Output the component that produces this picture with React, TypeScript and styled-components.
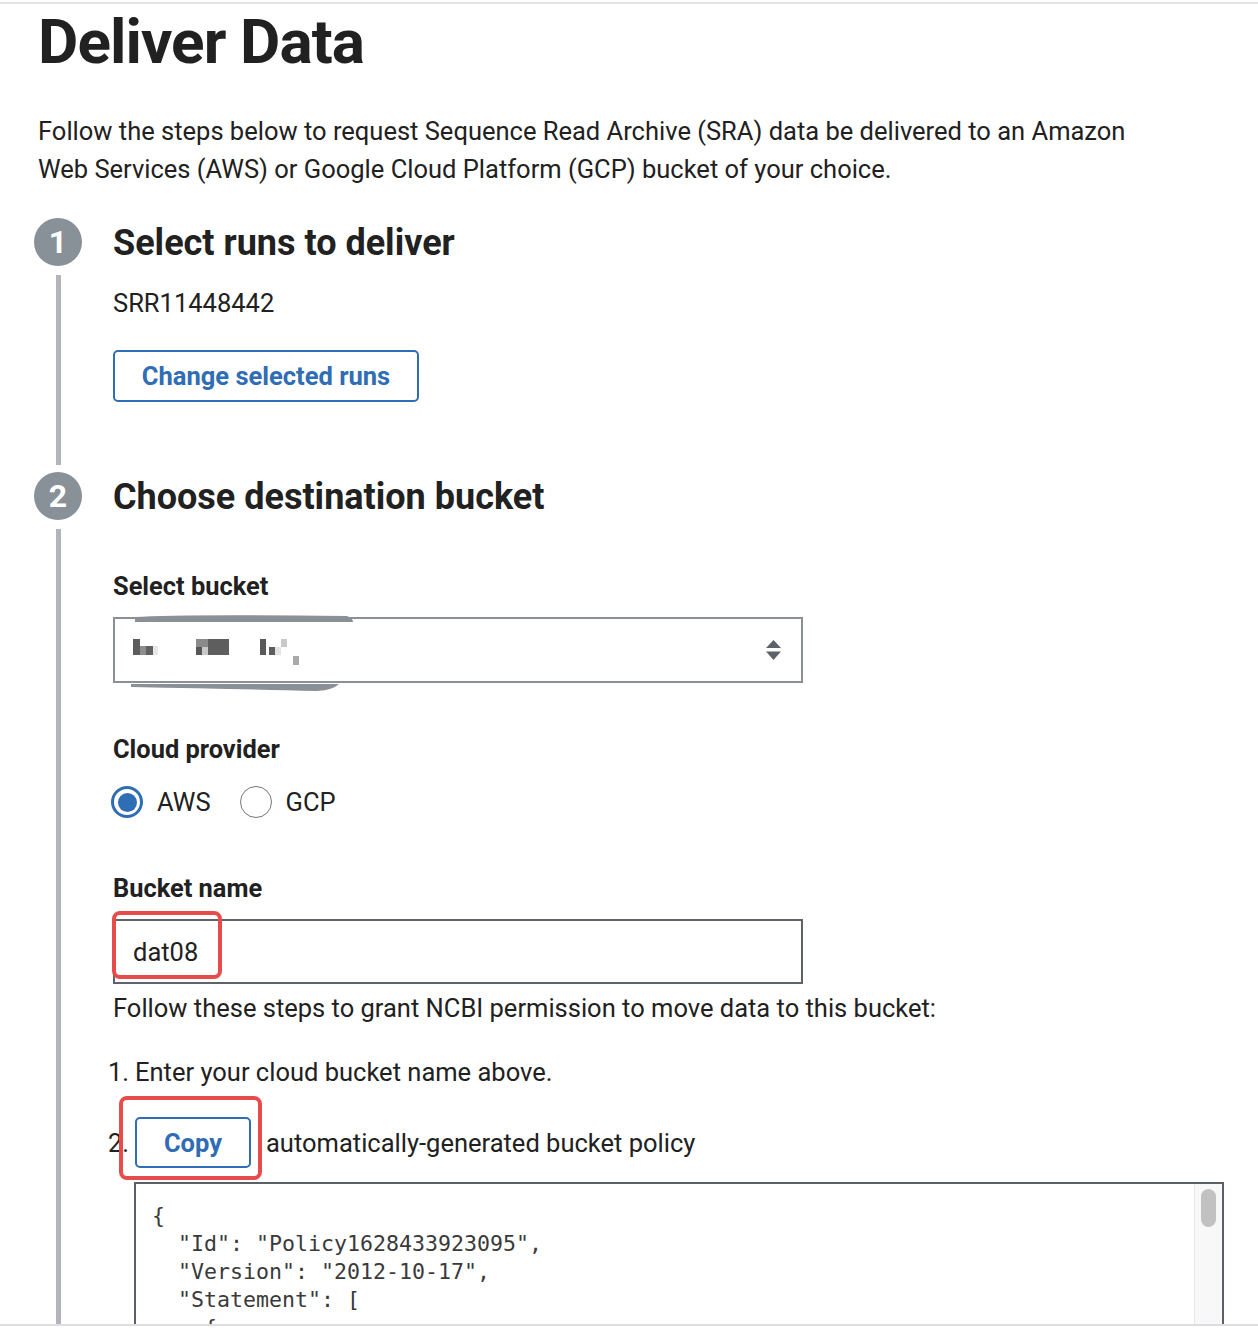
import * as React from 'react';
import styled, { createGlobalStyle } from 'styled-components';

const blue = '#2f6db5';
const ink = '#212121';

const GlobalStyle = createGlobalStyle`
  html, body {
    margin: 0;
    padding: 0;
    background: #fff;
  }
  body {
    font-family: Roboto, "Liberation Sans", Arial, sans-serif;
    color: ${ink};
  }
`;

const Frame = styled.div`
  margin-top: 2px;
  height: 1320px;
  overflow: hidden;
  border-top: 2px solid #e3e3e8;
  border-bottom: 2px solid #dcdce1;
`;

const Title = styled.h1`
  margin: 2px 0 0 38px;
  font-size: 62px;
  line-height: 72px;
  font-weight: 700;
  letter-spacing: -0.9px;
`;

const Intro = styled.p`
  margin: 34px 0 0 38px;
  font-size: 25.5px;
  line-height: 38px;
  max-width: 1105px;
`;

const Steps = styled.div`
  margin-top: 30px;
  padding-left: 34px;
`;

const Step = styled.section`
  display: grid;
  grid-template-columns: 79px 1fr;
`;

const Marker = styled.div`
  width: 48px;
  display: flex;
  flex-direction: column;
  align-items: center;
`;

const Bubble = styled.div`
  width: 48px;
  height: 48px;
  border-radius: 50%;
  background: #889098;
  color: #fff;
  font-size: 32px;
  font-weight: 700;
  display: flex;
  align-items: center;
  justify-content: center;
  flex-shrink: 0;
`;

const Rail = styled.div`
  width: 5px;
  flex: 1;
  background: #b3b3ba;
  margin: 9px 0 7px;
`;

const Body = styled.div<{ $pad?: number }>`
  padding-bottom: ${(p) => p.$pad ?? 0}px;
`;

const StepTitle = styled.h2`
  margin: 0;
  font-size: 36px;
  line-height: 50px;
  font-weight: 700;
`;

const Text = styled.div<{ $top: number }>`
  margin-top: ${(p) => p.$top}px;
  font-size: 25.5px;
  line-height: 38px;
`;

const Label = styled.div<{ $top: number }>`
  margin-top: ${(p) => p.$top}px;
  font-size: 25.4px;
  line-height: 38px;
  font-weight: 700;
`;

const OutlineButton = styled.button<{ $top?: number; $w: number; $h: number }>`
  display: flex;
  align-items: center;
  justify-content: center;
  margin-top: ${(p) => p.$top ?? 0}px;
  width: ${(p) => p.$w}px;
  height: ${(p) => p.$h}px;
  padding: 0;
  background: #fff;
  border: 2px solid ${blue};
  border-radius: 5px;
  color: ${blue};
  font-family: Roboto, "Liberation Sans", Arial, sans-serif;
  font-size: 25.5px;
  font-weight: 700;
  flex-shrink: 0;
`;

const Field = styled.div<{ $top: number; $h: number; $border: string }>`
  position: relative;
  margin-top: ${(p) => p.$top}px;
  width: 690px;
  height: ${(p) => p.$h}px;
  box-sizing: border-box;
  border: 2px solid ${(p) => p.$border};
  display: flex;
  align-items: center;
  padding: 0 18px;
  font-size: 25.5px;
`;

const Redaction = styled.svg`
  position: absolute;
  left: 6px;
  top: -6px;
`;

const Arrows = styled.svg`
  margin-left: auto;
  margin-right: 1px;
`;

const RadioRow = styled.div`
  margin-top: 15px;
  margin-left: -2px;
  height: 38px;
  display: flex;
  align-items: center;
  font-size: 25.5px;
`;

const Radio = styled.span<{ $on?: boolean }>`
  width: 32px;
  height: 32px;
  box-sizing: border-box;
  border-radius: 50%;
  border: ${(p) => (p.$on ? `3.5px solid ${blue}` : '1.5px solid #767676')};
  display: flex;
  align-items: center;
  justify-content: center;
  margin-right: 14px;

  &::after {
    content: '';
    width: 19px;
    height: 19px;
    border-radius: 50%;
    background: ${(p) => (p.$on ? blue : 'transparent')};
  }
`;

const Choice = styled.span`
  margin-right: 29px;
`;

const Callout = styled.div<{ $l: number; $t: number; $w: number; $h: number }>`
  position: absolute;
  left: ${(p) => p.$l}px;
  top: ${(p) => p.$t}px;
  width: ${(p) => p.$w}px;
  height: ${(p) => p.$h}px;
  box-sizing: border-box;
  border: 4px solid #e84b4b;
  border-radius: 8px;
  pointer-events: none;
`;

const Item = styled.div<{ $top: number }>`
  position: relative;
  margin: ${(p) => p.$top}px 0 0 -5px;
  display: flex;
  align-items: center;
  font-size: 25.5px;
  line-height: 38px;
`;

const Num = styled.span`
  width: 27px;
  flex-shrink: 0;
`;

const After = styled.span`
  margin-left: 15px;
`;

const Code = styled.div`
  margin: 14px 0 0 21px;
  width: 1090px;
  height: 420px;
  box-sizing: border-box;
  border: 2px solid #5b5f67;
  display: flex;
`;

const Pre = styled.pre`
  flex: 1;
  margin: 0;
  padding: 18px 0 0 16px;
  font-family: "DejaVu Sans Mono", "Liberation Mono", monospace;
  font-size: 21.6px;
  line-height: 28px;
  color: #3a3a3a;
`;

const Track = styled.div`
  width: 27px;
  background: #f8f8f8;
  border-left: 1px solid #e6e6e6;
  display: flex;
  justify-content: center;
  padding-top: 5px;
`;

const Thumb = styled.div`
  width: 15px;
  height: 38px;
  border-radius: 8px;
  background: #c1c1c1;
`;

const policy = `{
  "Id": "Policy1628433923095",
  "Version": "2012-10-17",
  "Statement": [
    {
      "Sid": "Stmt1628433923095",
      "Action": [
        "s3:PutObject"
      ],`;

export default function App() {
  return (
    <>
      <GlobalStyle />
      <Frame>
        <Title>Deliver Data</Title>
        <Intro>
          Follow the steps below to request Sequence Read Archive (SRA) data be delivered to an Amazon
          Web Services (AWS) or Google Cloud Platform (GCP) bucket of your choice.
        </Intro>
        <Steps>
          <Step>
            <Marker>
              <Bubble>1</Bubble>
              <Rail />
            </Marker>
            <Body $pad={70}>
              <StepTitle>Select runs to deliver</StepTitle>
              <Text $top={16}>SRR11448442</Text>
              <OutlineButton $top={28} $w={306} $h={52}>Change selected runs</OutlineButton>
            </Body>
          </Step>
          <Step>
            <Marker>
              <Bubble>2</Bubble>
              <Rail />
            </Marker>
            <Body>
              <StepTitle>Choose destination bucket</StepTitle>
              <Label $top={45}>Select bucket</Label>
              <Field $top={12} $h={66} $border="#8b9097">
                <Redaction width="240" height="78" viewBox="0 0 240 78">
                  <path d="M14 4 Q60 1 226 3 Q232 5 232 9 L14 9 Z" fill="#8b9097" />
                  <path d="M10 71 L218 71 Q212 77 196 78 Q120 76 10 74 Z" fill="#8b9097" />
                  <rect x="12" y="26" width="7" height="16" fill="#5c5c5c" />
                  <rect x="19" y="33" width="6" height="9" fill="#8d8d8d" />
                  <rect x="25" y="33" width="7" height="9" fill="#616161" />
                  <rect x="32" y="33" width="5" height="9" fill="#e8e8e8" />
                  <rect x="75" y="26" width="12" height="8" fill="#8a8a8a" />
                  <rect x="87" y="26" width="21" height="16" fill="#5e5e5e" />
                  <rect x="75" y="34" width="6" height="8" fill="#565656" />
                  <rect x="81" y="34" width="6" height="8" fill="#c8c8c8" />
                  <rect x="139" y="26" width="6" height="16" fill="#5a5a5a" />
                  <rect x="148" y="34" width="6" height="8" fill="#5d5d5d" />
                  <rect x="154" y="34" width="6" height="8" fill="#e3e3e3" />
                  <rect x="160" y="26" width="6" height="8" fill="#c9c9c9" />
                  <rect x="172" y="43" width="6" height="9" fill="#aaaaaa" />
                </Redaction>
                <Arrows width="17" height="22" viewBox="0 0 17 22">
                  <path d="M8.5 1 L16 9 L1 9 Z" fill="#5d6168" />
                  <path d="M1 12.5 L16 12.5 L8.5 21 Z" fill="#5d6168" />
                </Arrows>
              </Field>
              <Label $top={47}>Cloud provider</Label>
              <RadioRow>
                <Radio $on />
                <Choice>AWS</Choice>
                <Radio />
                <Choice>GCP</Choice>
              </RadioRow>
              <Label $top={48}>Bucket name</Label>
              <Field $top={12} $h={65} $border="#5f6368">
                dat08
                <Callout $l={-3} $t={-10} $w={110} $h={68} />
              </Field>
              <Text $top={5}>Follow these steps to grant NCBI permission to move data to this bucket:</Text>
              <Item $top={26}>
                <Num>1.</Num>
                Enter your cloud bucket name above.
              </Item>
              <Item $top={26}>
                <Num>2.</Num>
                <OutlineButton $w={116} $h={51}>Copy</OutlineButton>
                <After>automatically-generated bucket policy</After>
                <Callout $l={11} $t={-21} $w={143} $h={84} />
              </Item>
              <Code>
                <Pre>{policy}</Pre>
                <Track>
                  <Thumb />
                </Track>
              </Code>
            </Body>
          </Step>
        </Steps>
      </Frame>
    </>
  );
}
